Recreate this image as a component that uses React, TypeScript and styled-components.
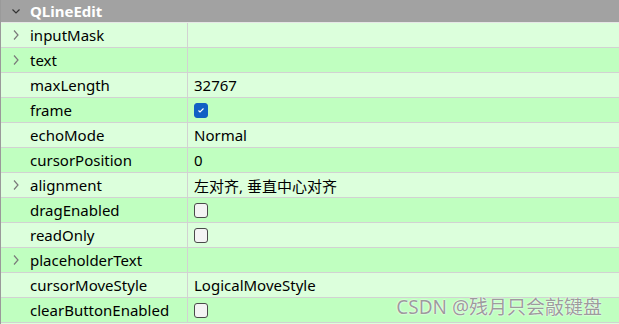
import React from 'react'
import styled, { createGlobalStyle } from 'styled-components'

type Prop = {
  name: string
  value?: string
  expandable?: boolean
  check?: 'on' | 'off'
}

const props: Prop[] = [
  { name: 'inputMask', expandable: true },
  { name: 'text', expandable: true },
  { name: 'maxLength', value: '32767' },
  { name: 'frame', check: 'on' },
  { name: 'echoMode', value: 'Normal' },
  { name: 'cursorPosition', value: '0' },
  { name: 'alignment', value: '左对齐, 垂直中心对齐', expandable: true },
  { name: 'dragEnabled', check: 'off' },
  { name: 'readOnly', check: 'off' },
  { name: 'placeholderText', expandable: true },
  { name: 'cursorMoveStyle', value: 'LogicalMoveStyle' },
  { name: 'clearButtonEnabled', check: 'off' },
]

const GlobalStyle = createGlobalStyle`
  html, body {
    margin: 0;
    padding: 0;
    background: #ffffff;
  }
  body {
    font-family: 'Noto Sans', 'Noto Sans CJK SC', sans-serif;
  }
`

const Panel = styled.div`
  position: relative;
  width: 619px;
  height: 324px;
  overflow: hidden;
  border-left: 1px solid #9a9a9a;
  box-sizing: border-box;
  background: #dcffdc;
`

const GroupHeader = styled.div`
  height: 22px;
  display: flex;
  align-items: center;
  background: #a2a2a2;
  border-bottom: 1px solid #e6e6e6;
  color: #ffffff;
  font-weight: bold;
  font-size: 15px;
`

const Arrow = styled.span`
  width: 29px;
  display: flex;
  justify-content: center;
  align-items: center;
  flex-shrink: 0;
`

const Row = styled.div<{ $alt: boolean }>`
  height: 25px;
  box-sizing: border-box;
  display: flex;
  background: ${(p) => (p.$alt ? '#c0ffc0' : '#dcffdc')};
  border-bottom: 1px solid #d2d2d2;
  font-size: 15px;
  color: #000000;
`

const NameCell = styled.div`
  width: 187px;
  flex-shrink: 0;
  display: flex;
  align-items: center;
  border-right: 1px solid #d2d2d2;
  box-sizing: border-box;
`

const ValueCell = styled.div`
  flex: 1;
  display: flex;
  align-items: center;
  padding-left: 6px;
`

const Check = styled.span<{ $on: boolean }>`
  width: 14px;
  height: 15px;
  box-sizing: border-box;
  border-radius: 3px;
  display: flex;
  align-items: center;
  justify-content: center;
  background: ${(p) => (p.$on ? '#1160c4' : '#f4f4f4')};
  border: 1px solid ${(p) => (p.$on ? '#1160c4' : '#4a4a4a')};
`

const Watermark = styled.div`
  position: absolute;
  right: 17px;
  bottom: 4px;
  font-size: 19px;
  color: #9c9c9c;
  text-shadow: 0 0 2px #ffffff, 0 0 1px #ffffff;
`

const Chevron = ({ down, color }: { down?: boolean; color: string }) => (
  <svg width="12" height="12" viewBox="0 0 12 12">
    <path
      d={down ? 'M2.5 4.5 L6 8 L9.5 4.5' : 'M4 1.5 L8 6 L4 10.5'}
      fill="none"
      stroke={color}
      strokeWidth="1.2"
    />
  </svg>
)

const App = () => (
  <>
    <GlobalStyle />
    <Panel>
      <GroupHeader>
        <Arrow>
          <Chevron down color="#333333" />
        </Arrow>
        QLineEdit
      </GroupHeader>
      {props.map((p, i) => (
        <Row key={p.name} $alt={i % 2 === 1}>
          <NameCell>
            <Arrow>{p.expandable && <Chevron color="#7a7a7a" />}</Arrow>
            {p.name}
          </NameCell>
          <ValueCell>
            {p.check ? (
              <Check $on={p.check === 'on'}>
                {p.check === 'on' && (
                  <svg width="8" height="8" viewBox="0 0 8 8">
                    <path d="M1.5 4.5 L3 6 L6.5 2.5" fill="none" stroke="#ffffff" strokeWidth="1.1" />
                  </svg>
                )}
              </Check>
            ) : (
              p.value
            )}
          </ValueCell>
        </Row>
      ))}
      <Watermark>CSDN @残月只会敲键盘</Watermark>
    </Panel>
  </>
)

export default App
